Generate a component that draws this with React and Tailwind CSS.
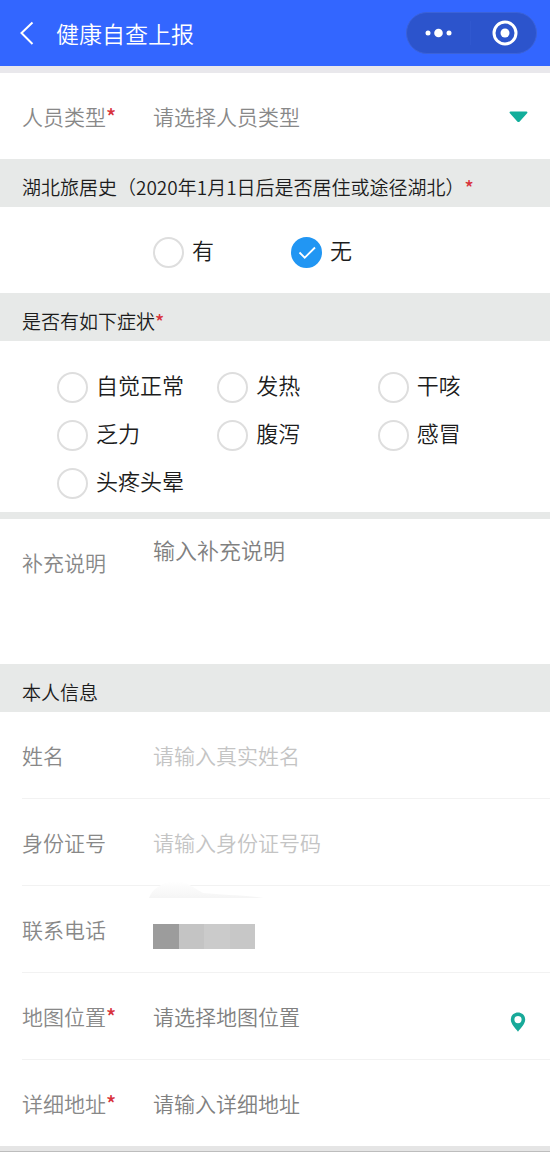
import { useState } from 'react'

const SYMPTOMS = ['自觉正常', '发热', '干咳', '乏力', '腹泻', '感冒', '头疼头晕']

function Required() {
  return <span className="font-medium text-[#d8333c]">*</span>
}

function SectionTitle({ id, children }) {
  return (
    <h2 id={id} className="flex h-12 items-center bg-[#e7e9e8] px-[22px] pt-2 text-[19px] text-[#1c1c1c]">
      {children}
    </h2>
  )
}

// One line of the form: label on the left, control on the right
function Row({ label, htmlFor, required, last, children }) {
  return (
    <div className={`ml-[22px] flex items-center pr-[22px] pt-0.5 text-[21px] ${last ? 'h-[86px]' : 'h-[87px] border-b border-[#f2f2f2]'}`}>
      <label htmlFor={htmlFor} className="w-[131px] shrink-0 text-[#888888]">
        {label}
        {required && <Required />}
      </label>
      {children}
    </div>
  )
}

// Round tick used for both the radio pair and the symptom list
function Choice({ type, name, label, checked, onChange }) {
  return (
    <label className="flex h-8 items-center gap-2 text-[22px] leading-7 text-[#1c1c1c]">
      <span className="relative flex size-[31px] shrink-0">
        <input
          type={type}
          name={name}
          checked={checked}
          onChange={onChange}
          className="size-[31px] appearance-none rounded-full border-2 border-[#dedede] bg-white checked:border-[#2196f3] checked:bg-[#2196f3]"
        />
        {checked && (
          <svg viewBox="0 0 31 31" className="pointer-events-none absolute inset-0 size-full" fill="none" stroke="#fff" strokeWidth="1.8">
            <path d="M8.5 15.5l5.2 5.2L24 10.5" />
          </svg>
        )}
      </span>
      <span className="pb-1.5">{label}</span>
    </label>
  )
}

export default function App() {
  const [personType, setPersonType] = useState('')
  const [travelled, setTravelled] = useState('无')
  const [symptoms, setSymptoms] = useState([])

  const toggleSymptom = (s) => {
    setSymptoms(prev => (prev.includes(s) ? prev.filter(x => x !== s) : [...prev, s]))
  }

  const inputClass = 'min-w-0 flex-1 bg-transparent text-[21px] text-[#333333] outline-none'

  return (
    <div className="bg-white font-['Noto_Sans_CJK_SC',sans-serif] font-[350]">
      <header className="flex h-[66px] items-center bg-[#3366ff] pl-[18px] pr-[13px] text-white">
        <button aria-label="返回" className="mr-[22px] flex">
          <svg width="16" height="26" viewBox="0 0 16 26" fill="none" stroke="currentColor" strokeWidth="2">
            <path d="M14.5 2.5L3.5 13l11 11" />
          </svg>
        </button>
        <h1 className="flex-1 text-[23px]">健康自查上报</h1>
        <div className="flex h-[42px] w-[131px] items-center rounded-full border border-[#3b62d8] bg-[#2c54cc]">
          <button aria-label="更多" className="flex flex-1 justify-center">
            <svg width="28" height="10" viewBox="0 0 28 10" fill="currentColor">
              <circle cx="3" cy="5" r="2.5" />
              <circle cx="13.5" cy="5" r="4.3" />
              <circle cx="24" cy="5" r="2.5" />
            </svg>
          </button>
          <span className="h-6 w-px bg-[#3058cf]" />
          <button aria-label="关闭" className="flex flex-1 justify-center pl-0.5">
            <svg width="26" height="26" viewBox="0 0 26 26">
              <circle cx="13" cy="13" r="11" fill="none" stroke="currentColor" strokeWidth="3" />
              <circle cx="13" cy="13" r="4.5" fill="currentColor" />
            </svg>
          </button>
        </div>
      </header>

      <form>
        <div className="h-[7px] bg-[#e9e8ec]" />
        <Row label="人员类型" htmlFor="person-type" required last>
          <select
            id="person-type"
            value={personType}
            onChange={(e) => setPersonType(e.target.value)}
            className="min-w-0 flex-1 appearance-none bg-transparent text-[21px] text-[#888888] outline-none"
          >
            <option value="">请选择人员类型</option>
          </select>
          <svg width="19" height="12" viewBox="0 0 19 12" fill="#12ae9b" className="pointer-events-none">
            <path d="M1.6 0.5h15.8c1 0 1.4 1 0.7 1.7l-7.4 8.2c-0.7 0.8-1.7 0.8-2.4 0L0.9 2.2C0.2 1.5 0.6 0.5 1.6 0.5z" />
          </svg>
        </Row>

        <SectionTitle id="travel-title">
          湖北旅居史（2020年1月1日后是否居住或途径湖北）<Required />
        </SectionTitle>
        <div role="radiogroup" aria-labelledby="travel-title" className="flex h-[86px] items-center gap-[77px] pl-[153px] pt-1">
          {['有', '无'].map((v) => (
            <Choice
              key={v}
              type="radio"
              name="travelled"
              label={v}
              checked={travelled === v}
              onChange={() => setTravelled(v)}
            />
          ))}
        </div>

        <SectionTitle id="symptom-title">
          是否有如下症状<Required />
        </SectionTitle>
        <div role="group" aria-labelledby="symptom-title" className="grid grid-cols-3 gap-y-4 pb-[13px] pl-[57px] pr-3 pt-[30px]">
          {SYMPTOMS.map((s) => (
            <Choice
              key={s}
              type="checkbox"
              name="symptoms"
              label={s}
              checked={symptoms.includes(s)}
              onChange={() => toggleSymptom(s)}
            />
          ))}
        </div>

        <div className="h-[7px] bg-[#e7e9e8]" />
        <div className="flex h-[145px] items-start px-[22px] pt-3.5">
          <label htmlFor="remark" className="w-[131px] shrink-0 pt-3.5 text-[21px] text-[#888888]">补充说明</label>
          <textarea
            id="remark"
            placeholder="输入补充说明"
            className="h-28 min-w-0 flex-1 resize-none bg-transparent text-[22px] leading-8 outline-none placeholder:text-[#808080]"
          />
        </div>

        <SectionTitle>本人信息</SectionTitle>
        <Row label="姓名" htmlFor="name">
          <input id="name" type="text" placeholder="请输入真实姓名" className={`${inputClass} placeholder:text-[#c4c4c4]`} />
        </Row>
        <Row label="身份证号" htmlFor="id-number">
          <input id="id-number" type="text" placeholder="请输入身份证号码" className={`${inputClass} placeholder:text-[#c4c4c4]`} />
        </Row>
        <Row label="联系电话">
          {/* phone number is masked, with a faint smudge above it */}
          <div className="relative mt-3 flex h-[25px]">
            <svg width="120" height="18" viewBox="0 0 120 18" className="absolute -left-1 -top-11" aria-hidden="true">
              <defs>
                <linearGradient id="smudge" x1="0" y1="0" x2="0" y2="1">
                  <stop offset="0" stopColor="#fff" />
                  <stop offset="1" stopColor="#f5f5f5" />
                </linearGradient>
              </defs>
              <path d="M0 18C3 10 12 2 26 1c12 0 20 8 28 12 18 2 42 2 60 5z" fill="url(#smudge)" />
            </svg>
            <span className="w-[26px] bg-[#9c9c9c]" />
            <span className="w-[25px] bg-[#c4c4c4]" />
            <span className="w-[26px] bg-[#cbcbcb]" />
            <span className="w-[25px] bg-[#c7c7c7]" />
          </div>
        </Row>
        <Row label="地图位置" htmlFor="location" required>
          <input id="location" type="text" readOnly placeholder="请选择地图位置" className={`${inputClass} placeholder:text-[#808080]`} />
          <button type="button" aria-label="选择地图位置" className="mr-0.5 mt-2.5 flex">
            <svg width="16" height="20" viewBox="0 0 16 20" fill="#18a999" fillRule="evenodd">
              <path d="M8 0.5C3.9 0.5 0.8 3.6 0.8 7.5c0 4.6 4.6 8.6 7.2 12.2 2.6-3.6 7.2-7.6 7.2-12.2C15.2 3.6 12.1 0.5 8 0.5zM8 4a3.6 3.6 0 1 1 0 7.2A3.6 3.6 0 0 1 8 4z" />
            </svg>
          </button>
        </Row>
        <Row label="详细地址" htmlFor="address" required last>
          <input id="address" type="text" placeholder="请输入详细地址" className={`${inputClass} placeholder:text-[#808080]`} />
        </Row>
        <div className="h-1.5 border-b border-[#bdbdbd] bg-[#e5e5e5]" />
      </form>
    </div>
  )
}
